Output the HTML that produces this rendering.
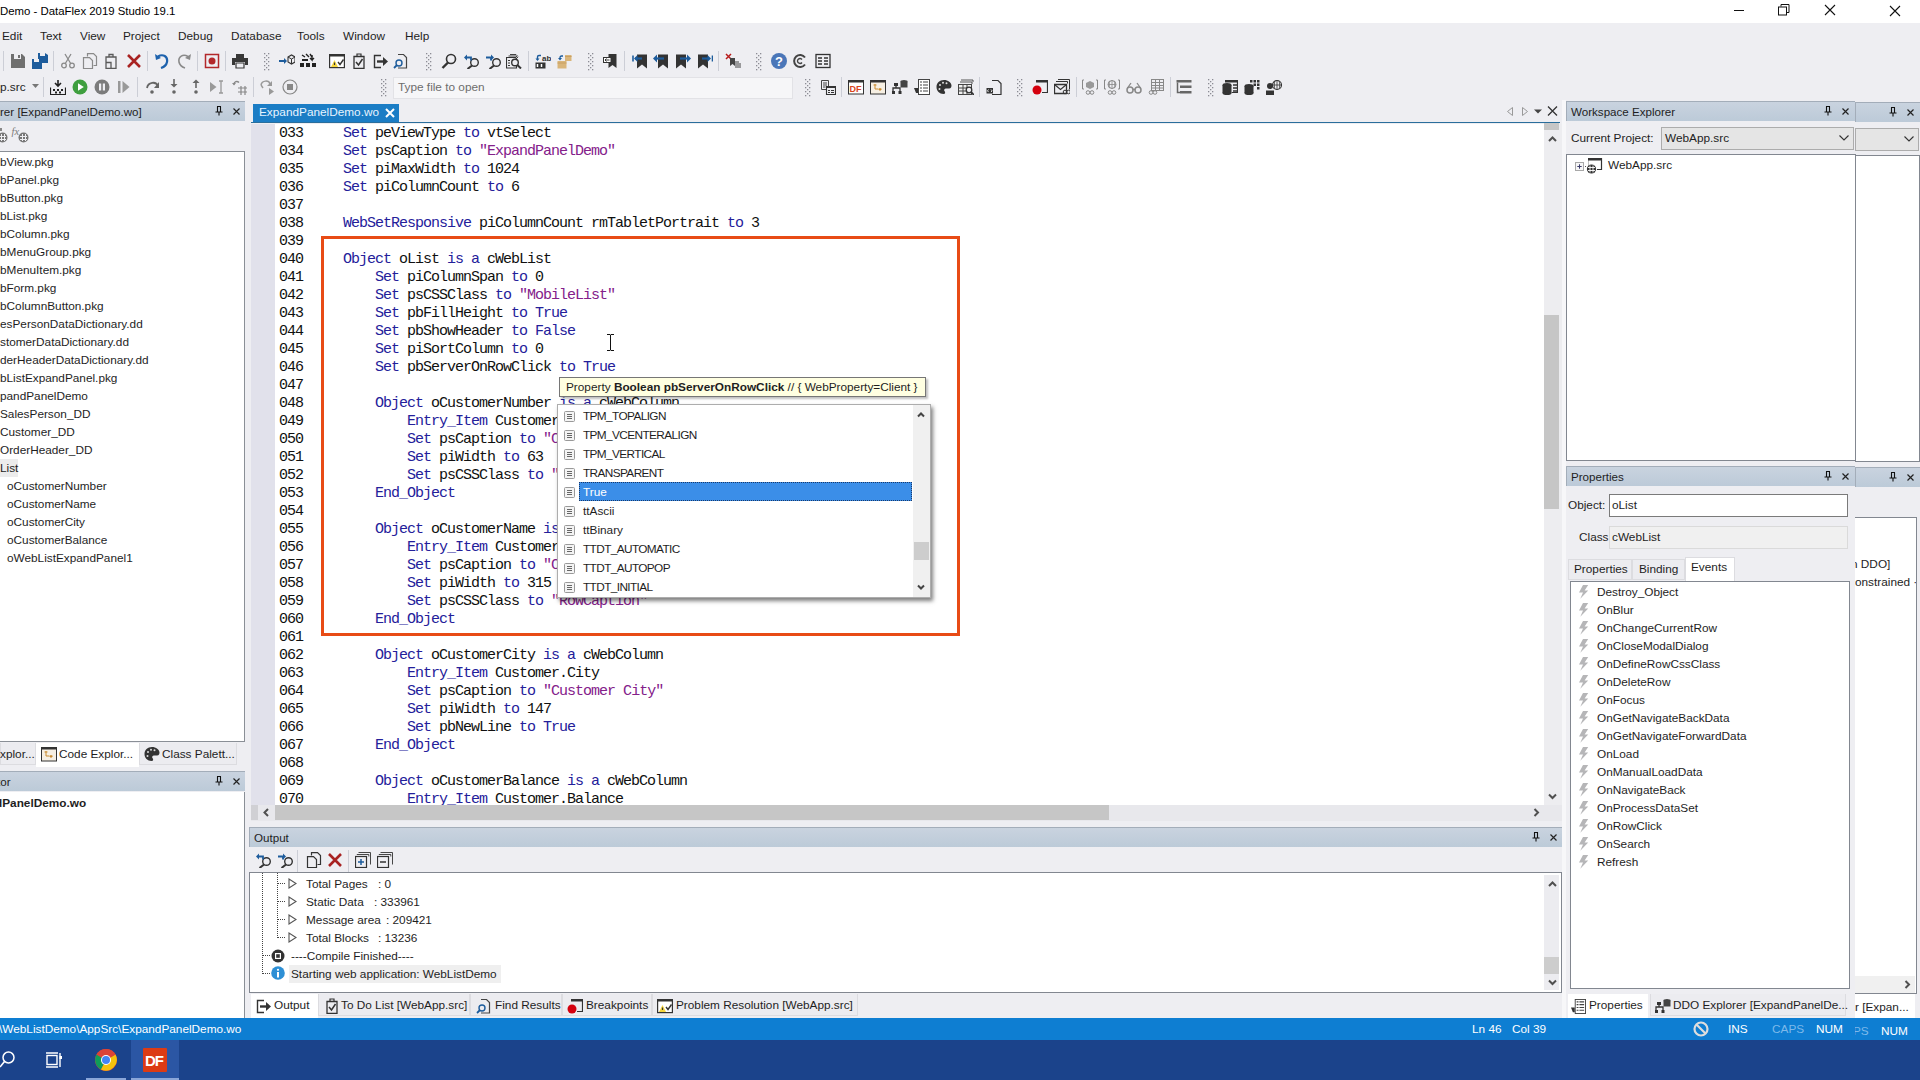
<!DOCTYPE html><html><head><meta charset="utf-8"><style>
*{margin:0;padding:0;box-sizing:border-box}
html,body{width:1920px;height:1080px;overflow:hidden;background:#eeeef2;font-family:"Liberation Sans",sans-serif;font-size:11.8px;color:#1e1e1e}
.a{position:absolute}
.t{position:absolute;white-space:pre;line-height:18px;height:18px}
.m{font-family:"Liberation Mono",monospace;font-size:15px;letter-spacing:-1px;color:#101010}
.hdr{position:absolute;height:20px;background:linear-gradient(#c9d3df,#bccad8);border-top:1px solid #a3adb9;border-left:1px solid #a3adb9}
.hdr span{position:absolute;left:4px;top:1px;line-height:17px;font-size:11.6px;color:#1e1e1e;white-space:pre}
.k{color:#24209a}
.s{color:#84208a}
.wh{background:#fff}
.grip{width:5px;background-image:linear-gradient(90deg,#b4b4bc 1px,transparent 1px),linear-gradient(90deg,#b4b4bc 1px,transparent 1px);background-size:4px 4px,4px 4px;background-position:0 0,2px 2px;background-repeat:repeat}
.tab{position:absolute;background:#ececf0;border:1px solid #dcdce0;border-top:none}
</style></head><body>
<div class="a" style="left:0;top:0;width:1920px;height:23px;background:#fff"></div>
<div class="t" style="left:0px;top:2px;color:#000;font-size:11.4px">Demo - DataFlex 2019 Studio 19.1</div>
<div class="a" style="left:1734px;top:10px;width:10px;height:1px;background:#111"></div>
<svg class="a" style="left:1778px;top:4px" width="12" height="12"><path d="M3 2.5V0.5h8v8H9" fill="none" stroke="#111"/><rect x="0.5" y="3" width="8" height="8" fill="none" stroke="#111"/></svg>
<svg class="a" style="left:1824px;top:4px" width="12" height="12"><path d="M1 1l10 10M11 1L1 11" stroke="#111" stroke-width="1.1"/></svg>
<svg class="a" style="left:1889px;top:5px" width="12" height="12"><path d="M1 1l10 10M11 1L1 11" stroke="#111" stroke-width="1.1"/></svg>
<div class="t" style="left:2px;top:27px;font-size:11.8px">Edit</div>
<div class="t" style="left:40px;top:27px;font-size:11.8px">Text</div>
<div class="t" style="left:80px;top:27px;font-size:11.8px">View</div>
<div class="t" style="left:123px;top:27px;font-size:11.8px">Project</div>
<div class="t" style="left:178px;top:27px;font-size:11.8px">Debug</div>
<div class="t" style="left:231px;top:27px;font-size:11.8px">Database</div>
<div class="t" style="left:297px;top:27px;font-size:11.8px">Tools</div>
<div class="t" style="left:343px;top:27px;font-size:11.8px">Window</div>
<div class="t" style="left:405px;top:27px;font-size:11.8px">Help</div>
<svg class="a" style="left:10px;top:53px" width="16" height="16" viewBox="0 0 16 16"><path d="M1 1h11l3 3v11H1z" fill="#6f6f6f"/><rect x="4" y="1" width="7" height="5" fill="#eeeef2"/><rect x="8" y="2" width="2" height="3" fill="#6f6f6f"/></svg>
<svg class="a" style="left:32px;top:53px" width="16" height="16" viewBox="0 0 16 16"><path d="M6 0h7l3 2v8H6z" fill="#1d5c9c"/><rect x="8" y="0" width="5" height="3" fill="#eeeef2"/><path d="M0 6h7l3 2v8H0z" fill="#1d5c9c"/><rect x="2" y="6" width="5" height="3" fill="#eeeef2"/></svg>
<svg class="a" style="left:60px;top:53px" width="16" height="16" viewBox="0 0 16 16"><g fill="none" stroke="#8a8a8a" stroke-width="1.3"><circle cx="4" cy="12.5" r="2.3"/><circle cx="12" cy="12.5" r="2.3"/><path d="M5.3 10.5L11 1M10.7 10.5L5 1"/></g></svg>
<svg class="a" style="left:82px;top:53px" width="16" height="16" viewBox="0 0 16 16"><g fill="none" stroke="#8a8a8a" stroke-width="1.2"><path d="M5.5 3.5V0.6h6l3 3v8.9h-3"/><path d="M1.5 4.6h6l3 3v8h-9z"/></g></svg>
<svg class="a" style="left:103px;top:53px" width="16" height="16" viewBox="0 0 16 16"><g fill="none" stroke="#5a5a5a" stroke-width="1.3"><path d="M3 4h10v11.5H3z"/><path d="M6 4V1.5h4V4"/><path d="M3 9.5h5v6"/></g></svg>
<svg class="a" style="left:126px;top:53px" width="16" height="16" viewBox="0 0 16 16"><path d="M2 2l12 12M14 2L2 14" stroke="#a82222" stroke-width="2.6"/></svg>
<svg class="a" style="left:154px;top:53px" width="16" height="16" viewBox="0 0 16 16"><path d="M4 3.5c5-3 10 0 9 5.5-.6 3-3 5-6 6" fill="none" stroke="#1e62ad" stroke-width="2.2"/><path d="M1 1l1 6 5-2z" fill="#1e62ad"/></svg>
<svg class="a" style="left:176px;top:53px" width="16" height="16" viewBox="0 0 16 16"><path d="M12 3.5c-5-3-10 0-9 5.5.6 3 3 5 6 6" fill="none" stroke="#8a8a8a" stroke-width="1.6"/><path d="M15 1l-1 6-5-2z" fill="#8a8a8a"/></svg>
<svg class="a" style="left:204px;top:53px" width="16" height="16" viewBox="0 0 16 16"><rect x="1.5" y="1.5" width="13" height="13" fill="none" stroke="#b3282b" stroke-width="1.5"/><circle cx="8" cy="8" r="3.5" fill="#b3282b"/></svg>
<svg class="a" style="left:232px;top:53px" width="16" height="16" viewBox="0 0 16 16"><path d="M4 1h8v4H4z" fill="#383838"/><path d="M0 5h16v7h-3v-3H3v3H0z" fill="#383838"/><path d="M4 10h8v5H4z" fill="none" stroke="#383838" stroke-width="1.2"/></svg>
<svg class="a" style="left:279px;top:53px" width="16" height="16" viewBox="0 0 16 16"><path d="M0 8h6" stroke="#1d5c9c" stroke-width="2"/><path d="M5 5l3 3-3 3z" fill="#1d5c9c"/><path d="M9 4l3.5-2 3.5 2v5l-3.5 2-3.5-2z" fill="none" stroke="#333" stroke-width="1.1"/><path d="M9 4l3.5 2 3.5-2M12.5 6v5" fill="none" stroke="#333" stroke-width="1"/></svg>
<svg class="a" style="left:300px;top:53px" width="16" height="16" viewBox="0 0 16 16"><path d="M2 2l3 2M6 1l3 3M10 1l2 3" stroke="#222" stroke-width="1.4"/><path d="M12 2v5l-2-2M12 7l2-2" stroke="#222" stroke-width="1.4" fill="none"/><rect x="0" y="10" width="4" height="4" fill="#222"/><rect x="6" y="10" width="4" height="4" fill="#222"/><rect x="12" y="10" width="4" height="4" fill="#222"/><rect x="2" y="6" width="6" height="2" fill="#222"/></svg>
<svg class="a" style="left:329px;top:53px" width="16" height="16" viewBox="0 0 16 16"><rect x="0.6" y="1.6" width="14.8" height="13" fill="#fff" stroke="#333" stroke-width="1.2"/><rect x="0" y="1" width="16" height="2.5" fill="#333"/><path d="M2 14l3.5-7 3.5 7z" fill="#f5d63d"/><path d="M5.5 9.5v2.5" stroke="#333" stroke-width="1.2"/><path d="M9 9l2 2.5 3.5-5" fill="none" stroke="#333" stroke-width="1.4"/></svg>
<svg class="a" style="left:351px;top:53px" width="16" height="16" viewBox="0 0 16 16"><path d="M3 3.5h10v12H3z" fill="none" stroke="#333" stroke-width="1.3"/><path d="M6 3.5V1h4v2.5" fill="none" stroke="#333" stroke-width="1.2"/><path d="M5 9l2.5 3 4-6" fill="none" stroke="#333" stroke-width="1.5"/></svg>
<svg class="a" style="left:373px;top:53px" width="16" height="16" viewBox="0 0 16 16"><path d="M8 2.5H1.5v12H8" fill="none" stroke="#333" stroke-width="1.4"/><path d="M4 8.5h7" stroke="#333" stroke-width="2.4"/><path d="M10 4l5 4.5-5 4.5z" fill="#333"/></svg>
<svg class="a" style="left:393px;top:53px" width="16" height="16" viewBox="0 0 16 16"><path d="M5 1.5h5.5l3 3V15H5" fill="none" stroke="#444" stroke-width="1.2"/><circle cx="6" cy="10" r="3" fill="none" stroke="#1d5c9c" stroke-width="1.4"/><path d="M4 12l-3 3" stroke="#1d5c9c" stroke-width="1.8"/></svg>
<svg class="a" style="left:441px;top:53px" width="16" height="16" viewBox="0 0 16 16"><circle cx="10" cy="6" r="4.5" fill="none" stroke="#333" stroke-width="1.6"/><path d="M7 9.5L1.5 15" stroke="#333" stroke-width="2.4"/></svg>
<svg class="a" style="left:464px;top:53px" width="16" height="16" viewBox="0 0 16 16"><circle cx="10.5" cy="9.5" r="3.8" fill="none" stroke="#333" stroke-width="1.4"/><path d="M8 12.5L3.5 16" stroke="#333" stroke-width="2"/><path d="M2 4.5h5v3" fill="none" stroke="#1d5c9c" stroke-width="1.8"/><path d="M0 4.5l3-3v6z" fill="#1d5c9c"/></svg>
<svg class="a" style="left:486px;top:53px" width="16" height="16" viewBox="0 0 16 16"><circle cx="10.5" cy="9.5" r="3.8" fill="none" stroke="#333" stroke-width="1.4"/><path d="M8 12.5L3.5 16" stroke="#333" stroke-width="2"/><path d="M0 4.5h5v3" fill="none" stroke="#1d5c9c" stroke-width="1.8"/><path d="M8 4.5l-3-3v6z" fill="#1d5c9c"/></svg>
<svg class="a" style="left:506px;top:53px" width="16" height="16" viewBox="0 0 16 16"><path d="M4 1.5h6l2 2M2.5 3h7.5l2 2" fill="none" stroke="#444" stroke-width="1"/><path d="M0.5 4.5h9l1 1v9.5h-10z" fill="#eeeef2" stroke="#333" stroke-width="1.1"/><path d="M2 7.5h2M2 10h2M2 12.5h2" stroke="#333" stroke-width="1.2"/><circle cx="9" cy="9.5" r="3.3" fill="#eeeef2" stroke="#333" stroke-width="1.4"/><path d="M11.3 12l3.7 3.5" stroke="#333" stroke-width="2"/></svg>
<svg class="a" style="left:535px;top:53px" width="16" height="16" viewBox="0 0 16 16"><path d="M6 2.5H4C3 2.5 2.5 3 2.5 4v2.5" fill="none" stroke="#1d5c9c" stroke-width="1.4"/><path d="M0.5 5.5h4l-2 2.5z" fill="#1d5c9c"/><text x="7" y="7.5" font-size="8" font-weight="bold" font-family="Liberation Sans" fill="#333">ab</text><rect x="0.5" y="9.5" width="10" height="6" fill="#333"/><path d="M2.5 11v3M6.5 11v3" stroke="#fff" stroke-width="1.5"/></svg>
<svg class="a" style="left:557px;top:53px" width="16" height="16" viewBox="0 0 16 16"><rect x="8" y="2" width="6.5" height="6" fill="#d9b57a"/><path d="M8 3.5h6.5" stroke="#c9a062" stroke-width="1"/><rect x="0.5" y="8" width="9" height="7.5" fill="#d9b57a"/><path d="M0.5 10h9" stroke="#c9a062" stroke-width="1"/><path d="M6 3H4.5C3.5 3 3 3.5 3 4.5V6" fill="none" stroke="#1d5c9c" stroke-width="1.3"/><path d="M1 5h4l-2 2.5z" fill="#1d5c9c"/></svg>
<svg class="a" style="left:603px;top:53px" width="16" height="16" viewBox="0 0 16 16"><path d="M5.5 1h8v14l-4-3-4 3z" fill="#333"/><rect x="0.5" y="4.5" width="7.5" height="5" fill="#fff" stroke="#333"/><path d="M2 7h4.5M3.5 5.5L2 7l1.5 1.5" fill="none" stroke="#333" stroke-width="1"/></svg>
<svg class="a" style="left:632px;top:53px" width="16" height="16" viewBox="0 0 16 16"><path d="M5 1.5h10v14l-5-4-5 4z" fill="#333"/><path d="M1 2.5v6" stroke="#1d5c9c" stroke-width="1.6"/><path d="M3 5.5h7" stroke="#1d5c9c" stroke-width="2.2"/><path d="M2 5.5l3.5-3.5v7z" fill="#1d5c9c"/></svg>
<svg class="a" style="left:653px;top:53px" width="16" height="16" viewBox="0 0 16 16"><path d="M5 1.5h10v14l-5-4-5 4z" fill="#333"/><path d="M3 5.5h8" stroke="#1d5c9c" stroke-width="2.2"/><path d="M0 5.5l4-4v8z" fill="#1d5c9c"/></svg>
<svg class="a" style="left:675px;top:53px" width="16" height="16" viewBox="0 0 16 16"><path d="M1 1.5h10v14l-5-4-5 4z" fill="#333"/><path d="M5 5.5h8" stroke="#1d5c9c" stroke-width="2.2"/><path d="M16 5.5l-4-4v8z" fill="#1d5c9c"/></svg>
<svg class="a" style="left:697px;top:53px" width="16" height="16" viewBox="0 0 16 16"><path d="M1 1.5h10v14l-5-4-5 4z" fill="#333"/><path d="M5 5.5h6" stroke="#1d5c9c" stroke-width="2.2"/><path d="M14 5.5l-3.5-3.5v7z" fill="#1d5c9c"/><path d="M15.5 2.5v6" stroke="#1d5c9c" stroke-width="1.6"/></svg>
<svg class="a" style="left:725px;top:53px" width="16" height="16" viewBox="0 0 16 16"><path d="M1 1l5 5M6 1L1 6" stroke="#b81c1c" stroke-width="1.5"/><path d="M5 5h5v8l-2.5-2-2.5 2z" fill="#444"/><path d="M11 8v7M13 8v7M15 10v5" stroke="#444" stroke-width="1"/></svg>
<svg class="a" style="left:771px;top:53px" width="16" height="16" viewBox="0 0 16 16"><circle cx="8" cy="8" r="8" fill="#4a76b8"/><text x="8" y="13" text-anchor="middle" font-size="13" font-weight="bold" font-family="Liberation Sans" fill="#fff">?</text></svg>
<svg class="a" style="left:792px;top:53px" width="16" height="16" viewBox="0 0 16 16"><path d="M13 4.5A6 6 0 1 0 13 11.5" fill="none" stroke="#444" stroke-width="2"/><path d="M10 6.5A2.5 2.5 0 1 0 10 9.5" fill="none" stroke="#444" stroke-width="1.4"/></svg>
<svg class="a" style="left:815px;top:53px" width="16" height="16" viewBox="0 0 16 16"><rect x="1" y="1.5" width="14" height="13" fill="none" stroke="#333" stroke-width="1.3"/><path d="M3 5h4M9 5h4M3 8h4M9 8h4M3 11h4M9 11h4" stroke="#333" stroke-width="1.6"/></svg>
<div class="a" style="left:3px;top:51px;width:1px;height:20px;background:#ccced6"></div>
<div class="a" style="left:53px;top:51px;width:1px;height:20px;background:#ccced6"></div>
<div class="a" style="left:147px;top:51px;width:1px;height:20px;background:#ccced6"></div>
<div class="a" style="left:197px;top:51px;width:1px;height:20px;background:#ccced6"></div>
<div class="a" style="left:225px;top:51px;width:1px;height:20px;background:#ccced6"></div>
<div class="a" style="left:528px;top:51px;width:1px;height:20px;background:#ccced6"></div>
<div class="a" style="left:624px;top:51px;width:1px;height:20px;background:#ccced6"></div>
<div class="a" style="left:718px;top:51px;width:1px;height:20px;background:#ccced6"></div>
<svg class="a" style="left:264px;top:51px" width="6" height="20"><rect x="0" y="2" width="1.3" height="1.3" fill="#8c8c94"/><rect x="4" y="2" width="1.3" height="1.3" fill="#8c8c94"/><rect x="2" y="4" width="1.3" height="1.3" fill="#8c8c94"/><rect x="0" y="6" width="1.3" height="1.3" fill="#8c8c94"/><rect x="4" y="6" width="1.3" height="1.3" fill="#8c8c94"/><rect x="2" y="8" width="1.3" height="1.3" fill="#8c8c94"/><rect x="0" y="10" width="1.3" height="1.3" fill="#8c8c94"/><rect x="4" y="10" width="1.3" height="1.3" fill="#8c8c94"/><rect x="2" y="12" width="1.3" height="1.3" fill="#8c8c94"/><rect x="0" y="14" width="1.3" height="1.3" fill="#8c8c94"/><rect x="4" y="14" width="1.3" height="1.3" fill="#8c8c94"/><rect x="2" y="16" width="1.3" height="1.3" fill="#8c8c94"/><rect x="0" y="18" width="1.3" height="1.3" fill="#8c8c94"/><rect x="4" y="18" width="1.3" height="1.3" fill="#8c8c94"/></svg>
<svg class="a" style="left:426px;top:51px" width="6" height="20"><rect x="0" y="2" width="1.3" height="1.3" fill="#8c8c94"/><rect x="4" y="2" width="1.3" height="1.3" fill="#8c8c94"/><rect x="2" y="4" width="1.3" height="1.3" fill="#8c8c94"/><rect x="0" y="6" width="1.3" height="1.3" fill="#8c8c94"/><rect x="4" y="6" width="1.3" height="1.3" fill="#8c8c94"/><rect x="2" y="8" width="1.3" height="1.3" fill="#8c8c94"/><rect x="0" y="10" width="1.3" height="1.3" fill="#8c8c94"/><rect x="4" y="10" width="1.3" height="1.3" fill="#8c8c94"/><rect x="2" y="12" width="1.3" height="1.3" fill="#8c8c94"/><rect x="0" y="14" width="1.3" height="1.3" fill="#8c8c94"/><rect x="4" y="14" width="1.3" height="1.3" fill="#8c8c94"/><rect x="2" y="16" width="1.3" height="1.3" fill="#8c8c94"/><rect x="0" y="18" width="1.3" height="1.3" fill="#8c8c94"/><rect x="4" y="18" width="1.3" height="1.3" fill="#8c8c94"/></svg>
<svg class="a" style="left:588px;top:51px" width="6" height="20"><rect x="0" y="2" width="1.3" height="1.3" fill="#8c8c94"/><rect x="4" y="2" width="1.3" height="1.3" fill="#8c8c94"/><rect x="2" y="4" width="1.3" height="1.3" fill="#8c8c94"/><rect x="0" y="6" width="1.3" height="1.3" fill="#8c8c94"/><rect x="4" y="6" width="1.3" height="1.3" fill="#8c8c94"/><rect x="2" y="8" width="1.3" height="1.3" fill="#8c8c94"/><rect x="0" y="10" width="1.3" height="1.3" fill="#8c8c94"/><rect x="4" y="10" width="1.3" height="1.3" fill="#8c8c94"/><rect x="2" y="12" width="1.3" height="1.3" fill="#8c8c94"/><rect x="0" y="14" width="1.3" height="1.3" fill="#8c8c94"/><rect x="4" y="14" width="1.3" height="1.3" fill="#8c8c94"/><rect x="2" y="16" width="1.3" height="1.3" fill="#8c8c94"/><rect x="0" y="18" width="1.3" height="1.3" fill="#8c8c94"/><rect x="4" y="18" width="1.3" height="1.3" fill="#8c8c94"/></svg>
<svg class="a" style="left:756px;top:51px" width="6" height="20"><rect x="0" y="2" width="1.3" height="1.3" fill="#8c8c94"/><rect x="4" y="2" width="1.3" height="1.3" fill="#8c8c94"/><rect x="2" y="4" width="1.3" height="1.3" fill="#8c8c94"/><rect x="0" y="6" width="1.3" height="1.3" fill="#8c8c94"/><rect x="4" y="6" width="1.3" height="1.3" fill="#8c8c94"/><rect x="2" y="8" width="1.3" height="1.3" fill="#8c8c94"/><rect x="0" y="10" width="1.3" height="1.3" fill="#8c8c94"/><rect x="4" y="10" width="1.3" height="1.3" fill="#8c8c94"/><rect x="2" y="12" width="1.3" height="1.3" fill="#8c8c94"/><rect x="0" y="14" width="1.3" height="1.3" fill="#8c8c94"/><rect x="4" y="14" width="1.3" height="1.3" fill="#8c8c94"/><rect x="2" y="16" width="1.3" height="1.3" fill="#8c8c94"/><rect x="0" y="18" width="1.3" height="1.3" fill="#8c8c94"/><rect x="4" y="18" width="1.3" height="1.3" fill="#8c8c94"/></svg>
<div class="t" style="left:0px;top:78px;">p.src</div>
<svg class="a" style="left:32px;top:84px" width="7" height="4"><path d="M0 0h7L3.5 4z" fill="#777"/></svg>
<svg class="a" style="left:50px;top:79px" width="16" height="16" viewBox="0 0 16 16"><path d="M8 1v6M5 4l3 3 3-3" fill="none" stroke="#222" stroke-width="1.6"/><path d="M0.5 8.5v7h15v-7" fill="none" stroke="#222" stroke-width="1.2"/><g fill="#222"><rect x="3" y="10" width="2" height="2"/><rect x="7" y="10" width="2" height="2"/><rect x="11" y="10" width="2" height="2"/><rect x="5" y="12.5" width="2" height="2"/><rect x="9" y="12.5" width="2" height="2"/></g></svg>
<svg class="a" style="left:72px;top:79px" width="16" height="16" viewBox="0 0 16 16"><circle cx="8" cy="8" r="7.5" fill="#3f9f3f"/><path d="M6 4.3v7.4l5.8-3.7z" fill="#fff"/></svg>
<svg class="a" style="left:94px;top:79px" width="16" height="16" viewBox="0 0 16 16"><circle cx="8" cy="8" r="7.5" fill="#7b7b7b"/><rect x="5" y="4.5" width="2.2" height="7" fill="#eeeef2"/><rect x="8.8" y="4.5" width="2.2" height="7" fill="#eeeef2"/></svg>
<svg class="a" style="left:117px;top:79px" width="16" height="16" viewBox="0 0 16 16"><rect x="1" y="2" width="2.5" height="12" fill="#999"/><path d="M5.5 2v12l7-6z" fill="#999"/></svg>
<svg class="a" style="left:145px;top:79px" width="16" height="16" viewBox="0 0 16 16"><path d="M2 9c1-6 9-7 11-2" fill="none" stroke="#666" stroke-width="1.8"/><path d="M14 3v6H9z" fill="#666"/><circle cx="7" cy="13" r="1.8" fill="#666"/></svg>
<svg class="a" style="left:166px;top:79px" width="16" height="16" viewBox="0 0 16 16"><path d="M8 0v6" stroke="#666" stroke-width="1.6"/><path d="M4.5 5L8 8.5 11.5 5z" fill="#666"/><circle cx="8" cy="13" r="1.8" fill="#666"/></svg>
<svg class="a" style="left:188px;top:79px" width="16" height="16" viewBox="0 0 16 16"><path d="M8 3v6" stroke="#666" stroke-width="1.6"/><path d="M4.5 4L8 0.5 11.5 4z" fill="#666"/><circle cx="8" cy="13" r="1.8" fill="#666"/></svg>
<svg class="a" style="left:210px;top:79px" width="16" height="16" viewBox="0 0 16 16"><path d="M0 3v10l6.5-5z" fill="#999"/><path d="M9 2h4M11 2v12M9 14h4" stroke="#999" stroke-width="1.3"/></svg>
<svg class="a" style="left:231px;top:79px" width="16" height="16" viewBox="0 0 16 16"><path d="M3 5.5c0-3 3-4 5-2" fill="none" stroke="#888" stroke-width="1.4"/><path d="M1 4l2 2.5L5 4" fill="#888"/><path d="M7 9h9M7 13h9M10 7v9M14 7v9" stroke="#888" stroke-width="1.2"/></svg>
<svg class="a" style="left:259px;top:79px" width="16" height="16" viewBox="0 0 16 16"><path d="M2 6c1-5 8-5 9-1" fill="none" stroke="#999" stroke-width="1.5"/><path d="M13 2v5H8z" fill="#999"/><path d="M10 9v7l5-3.5z" fill="#999"/><path d="M2 6l2 3" stroke="#999" stroke-width="1.4"/></svg>
<svg class="a" style="left:282px;top:79px" width="16" height="16" viewBox="0 0 16 16"><circle cx="8" cy="8" r="7" fill="none" stroke="#888" stroke-width="1.2"/><rect x="5" y="5" width="6" height="6" fill="#888"/></svg>
<svg class="a" style="left:820px;top:79px" width="16" height="16" viewBox="0 0 16 16"><path d="M1.5 1.5h7v9h-7z" fill="none" stroke="#444" stroke-width="1"/><path d="M3 4h4M3 6h4M3 8h2.5" stroke="#444" stroke-width="1"/><path d="M6.5 7.5h9v8h-9z" fill="#eeeef2" stroke="#333" stroke-width="1.1"/><rect x="6" y="7" width="10" height="2" fill="#333"/><path d="M8 11.5h2M11 11.5h3M8 13.5h2M11 13.5h3" stroke="#333" stroke-width="1.2"/></svg>
<svg class="a" style="left:848px;top:79px" width="16" height="16" viewBox="0 0 16 16"><rect x="0.5" y="1.5" width="15" height="13.5" fill="#fff" stroke="#333"/><rect x="0" y="1" width="16" height="2.5" fill="#333"/><text x="1.5" y="13" font-size="9" font-weight="bold" font-family="Liberation Sans" fill="#d9451e">DF</text></svg>
<svg class="a" style="left:870px;top:79px" width="16" height="16" viewBox="0 0 16 16"><rect x="0.5" y="1.5" width="15" height="13.5" fill="#f6efe3" stroke="#333"/><rect x="0" y="1" width="16" height="2.5" fill="#333"/><path d="M3 6l2-1 2 1-2 1z" fill="#c98a2e"/><path d="M8 10l2-1 2 1-2 2z" fill="#c98a2e"/><path d="M5 7v3h3" fill="none" stroke="#c98a2e"/></svg>
<svg class="a" style="left:892px;top:79px" width="16" height="16" viewBox="0 0 16 16"><ellipse cx="12" cy="2.5" rx="3.5" ry="1.5" fill="#444"/><rect x="8.5" y="2.5" width="7" height="6" fill="#444"/><path d="M4 6v3M1 12V9h7v3" fill="none" stroke="#333" stroke-width="1.3"/><rect x="2" y="4" width="4" height="3" fill="#333"/><rect x="0" y="12" width="3" height="3" fill="#333"/><rect x="6.5" y="12" width="3" height="3" fill="#333"/></svg>
<svg class="a" style="left:914px;top:79px" width="16" height="16" viewBox="0 0 16 16"><rect x="4.5" y="0.5" width="11" height="15" fill="#fff" stroke="#444"/><path d="M6 3h2M9 3h5M6 6h2M9 6h5M6 9h2M9 9h5M6 12h2M9 12h5" stroke="#444" stroke-width="1.2"/><path d="M0 9h4v5H2z" fill="#333"/></svg>
<svg class="a" style="left:936px;top:79px" width="16" height="16" viewBox="0 0 16 16"><path d="M8 1C3.5 1 0.5 4 0.5 8s3 7 7 7c2 0 2-2 1-3s0-2.5 1.5-2.5H13c2 0 2.5-1.5 2.5-3C15.5 3.5 12 1 8 1z" fill="#333"/><circle cx="4" cy="6" r="1" fill="#ddd"/><circle cx="7" cy="3.8" r="1" fill="#ddd"/><circle cx="10.5" cy="4.2" r="1" fill="#ddd"/><circle cx="3.5" cy="10" r="1" fill="#ddd"/></svg>
<svg class="a" style="left:958px;top:79px" width="16" height="16" viewBox="0 0 16 16"><path d="M3 1h12v2M2 3h12v2" fill="none" stroke="#444" stroke-width=".9"/><rect x="0.5" y="5.5" width="13" height="10" fill="#eee" stroke="#444"/><path d="M0.5 9h13M0.5 12h13M5 5.5v10M9 5.5v10" stroke="#444"/><circle cx="11" cy="11" r="2.8" fill="#eeeef2" stroke="#333" stroke-width="1.3"/><path d="M13 13l3 3" stroke="#333" stroke-width="1.8"/></svg>
<svg class="a" style="left:986px;top:79px" width="16" height="16" viewBox="0 0 16 16"><path d="M6 1.5h6l3 3v11H6" fill="none" stroke="#333" stroke-width="1.2"/><rect x="0.5" y="9" width="6.5" height="5.5" fill="#333"/><path d="M2.5 10.5l-1 1.3 1 1.3M5 10.5l1 1.3-1 1.3" stroke="#fff" stroke-width=".9" fill="none"/></svg>
<svg class="a" style="left:1032px;top:79px" width="16" height="16" viewBox="0 0 16 16"><path d="M4 1.5h11.5v12H10" fill="none" stroke="#333" stroke-width="1.2"/><rect x="4" y="1" width="11.5" height="2.5" fill="#333"/><circle cx="5" cy="11" r="4.5" fill="#d4000e"/></svg>
<svg class="a" style="left:1054px;top:79px" width="16" height="16" viewBox="0 0 16 16"><path d="M4 0.5h11.5v10M2 2.5h11.5v2" fill="none" stroke="#333" stroke-width="1"/><path d="M0.5 5.5h12v9H0.5z" fill="none" stroke="#333" stroke-width="1.3"/><path d="M0.5 5.5l6 5 6-5" fill="none" stroke="#333" stroke-width="1.1"/><circle cx="11" cy="13" r="1.8" fill="none" stroke="#333"/><circle cx="14.5" cy="13" r="1.8" fill="none" stroke="#333"/></svg>
<svg class="a" style="left:1082px;top:79px" width="16" height="16" viewBox="0 0 16 16"><path d="M2 1H0.5v9H2M14 1h1.5v9H14" fill="none" stroke="#888" stroke-width="1"/><path d="M4 4l4-2 4 2v4l-4 2-4-2z" fill="#999"/><circle cx="6" cy="13.5" r="1.8" fill="none" stroke="#888"/><circle cx="10" cy="13.5" r="1.8" fill="none" stroke="#888"/></svg>
<svg class="a" style="left:1104px;top:79px" width="16" height="16" viewBox="0 0 16 16"><path d="M2 1H0.5v9H2M14 1h1.5v9H14" fill="none" stroke="#888" stroke-width="1"/><circle cx="8" cy="5.5" r="4" fill="none" stroke="#888"/><path d="M4 5.5h8M8 1.5v8M6 2c-1 2-1 5 0 7M10 2c1 2 1 5 0 7" fill="none" stroke="#888" stroke-width=".8"/><circle cx="6" cy="13.5" r="1.8" fill="none" stroke="#888"/><circle cx="10" cy="13.5" r="1.8" fill="none" stroke="#888"/></svg>
<svg class="a" style="left:1126px;top:79px" width="16" height="16" viewBox="0 0 16 16"><circle cx="4" cy="11" r="3" fill="none" stroke="#888" stroke-width="1.5"/><circle cx="12" cy="11" r="3" fill="none" stroke="#888" stroke-width="1.5"/><path d="M7 10.5h2M1.5 9L5 4M14.5 9L11 4" fill="none" stroke="#888" stroke-width="1.3"/></svg>
<svg class="a" style="left:1148px;top:79px" width="16" height="16" viewBox="0 0 16 16"><rect x="3.5" y="0.5" width="12" height="11" fill="none" stroke="#888"/><path d="M3.5 3.5h12M3.5 6.5h12M3.5 9h12M7.5 0.5v11M11.5 0.5v11" stroke="#888"/><circle cx="3" cy="13.5" r="1.8" fill="#eeeef2" stroke="#888"/><circle cx="7" cy="13.5" r="1.8" fill="#eeeef2" stroke="#888"/></svg>
<svg class="a" style="left:1176px;top:79px" width="16" height="16" viewBox="0 0 16 16"><rect x="0.5" y="1" width="15" height="2.5" fill="#666"/><rect x="4" y="6.5" width="11.5" height="2.5" fill="#666"/><rect x="4" y="12" width="11.5" height="2.5" fill="#666"/><path d="M1.5 3.5v10h2.5" fill="none" stroke="#666" stroke-width="1.5"/></svg>
<svg class="a" style="left:1222px;top:79px" width="16" height="16" viewBox="0 0 16 16"><ellipse cx="5" cy="6" rx="4.5" ry="2" fill="#333"/><rect x="0.5" y="6" width="9" height="8" fill="#333"/><ellipse cx="5" cy="14" rx="4.5" ry="2" fill="#333"/><path d="M3 1.5h12.5v12H10" fill="none" stroke="#333" stroke-width="1.2"/><rect x="3" y="1" width="12.5" height="2.5" fill="#333"/><path d="M11 6h4M11 9h4M11 12h4" stroke="#333" stroke-width="1.6"/></svg>
<svg class="a" style="left:1244px;top:79px" width="16" height="16" viewBox="0 0 16 16"><ellipse cx="5" cy="7" rx="4.5" ry="2" fill="#333"/><rect x="0.5" y="7" width="9" height="7" fill="#333"/><ellipse cx="5" cy="14" rx="4.5" ry="2" fill="#333"/><g fill="#333"><rect x="6" y="1" width="2.5" height="2.5"/><rect x="9.5" y="1" width="2.5" height="2.5"/><rect x="13" y="1" width="2.5" height="2.5"/><rect x="9.5" y="4.5" width="2.5" height="2.5"/><rect x="13" y="4.5" width="2.5" height="2.5"/><rect x="13" y="8" width="2.5" height="2.5"/></g></svg>
<svg class="a" style="left:1266px;top:79px" width="16" height="16" viewBox="0 0 16 16"><circle cx="11" cy="6" r="4.5" fill="none" stroke="#333" stroke-width="1.1"/><path d="M6.5 6h9M11 1.5v9M9 2c-1 2-1 6 0 8M13 2c1 2 1 6 0 8" fill="none" stroke="#333" stroke-width=".8"/><circle cx="4" cy="7" r="3" fill="#333"/><path d="M0 16v-4.5h8V16z" fill="#333"/></svg>
<div class="a" style="left:43px;top:77px;width:1px;height:20px;background:#ccced6"></div>
<div class="a" style="left:137px;top:77px;width:1px;height:20px;background:#ccced6"></div>
<div class="a" style="left:253px;top:77px;width:1px;height:20px;background:#ccced6"></div>
<div class="a" style="left:841px;top:77px;width:1px;height:20px;background:#ccced6"></div>
<div class="a" style="left:979px;top:77px;width:1px;height:20px;background:#ccced6"></div>
<div class="a" style="left:1076px;top:77px;width:1px;height:20px;background:#ccced6"></div>
<div class="a" style="left:1170px;top:77px;width:1px;height:20px;background:#ccced6"></div>
<svg class="a" style="left:381px;top:77px" width="6" height="20"><rect x="0" y="2" width="1.3" height="1.3" fill="#8c8c94"/><rect x="4" y="2" width="1.3" height="1.3" fill="#8c8c94"/><rect x="2" y="4" width="1.3" height="1.3" fill="#8c8c94"/><rect x="0" y="6" width="1.3" height="1.3" fill="#8c8c94"/><rect x="4" y="6" width="1.3" height="1.3" fill="#8c8c94"/><rect x="2" y="8" width="1.3" height="1.3" fill="#8c8c94"/><rect x="0" y="10" width="1.3" height="1.3" fill="#8c8c94"/><rect x="4" y="10" width="1.3" height="1.3" fill="#8c8c94"/><rect x="2" y="12" width="1.3" height="1.3" fill="#8c8c94"/><rect x="0" y="14" width="1.3" height="1.3" fill="#8c8c94"/><rect x="4" y="14" width="1.3" height="1.3" fill="#8c8c94"/><rect x="2" y="16" width="1.3" height="1.3" fill="#8c8c94"/><rect x="0" y="18" width="1.3" height="1.3" fill="#8c8c94"/><rect x="4" y="18" width="1.3" height="1.3" fill="#8c8c94"/></svg>
<svg class="a" style="left:805px;top:77px" width="6" height="20"><rect x="0" y="2" width="1.3" height="1.3" fill="#8c8c94"/><rect x="4" y="2" width="1.3" height="1.3" fill="#8c8c94"/><rect x="2" y="4" width="1.3" height="1.3" fill="#8c8c94"/><rect x="0" y="6" width="1.3" height="1.3" fill="#8c8c94"/><rect x="4" y="6" width="1.3" height="1.3" fill="#8c8c94"/><rect x="2" y="8" width="1.3" height="1.3" fill="#8c8c94"/><rect x="0" y="10" width="1.3" height="1.3" fill="#8c8c94"/><rect x="4" y="10" width="1.3" height="1.3" fill="#8c8c94"/><rect x="2" y="12" width="1.3" height="1.3" fill="#8c8c94"/><rect x="0" y="14" width="1.3" height="1.3" fill="#8c8c94"/><rect x="4" y="14" width="1.3" height="1.3" fill="#8c8c94"/><rect x="2" y="16" width="1.3" height="1.3" fill="#8c8c94"/><rect x="0" y="18" width="1.3" height="1.3" fill="#8c8c94"/><rect x="4" y="18" width="1.3" height="1.3" fill="#8c8c94"/></svg>
<svg class="a" style="left:1017px;top:77px" width="6" height="20"><rect x="0" y="2" width="1.3" height="1.3" fill="#8c8c94"/><rect x="4" y="2" width="1.3" height="1.3" fill="#8c8c94"/><rect x="2" y="4" width="1.3" height="1.3" fill="#8c8c94"/><rect x="0" y="6" width="1.3" height="1.3" fill="#8c8c94"/><rect x="4" y="6" width="1.3" height="1.3" fill="#8c8c94"/><rect x="2" y="8" width="1.3" height="1.3" fill="#8c8c94"/><rect x="0" y="10" width="1.3" height="1.3" fill="#8c8c94"/><rect x="4" y="10" width="1.3" height="1.3" fill="#8c8c94"/><rect x="2" y="12" width="1.3" height="1.3" fill="#8c8c94"/><rect x="0" y="14" width="1.3" height="1.3" fill="#8c8c94"/><rect x="4" y="14" width="1.3" height="1.3" fill="#8c8c94"/><rect x="2" y="16" width="1.3" height="1.3" fill="#8c8c94"/><rect x="0" y="18" width="1.3" height="1.3" fill="#8c8c94"/><rect x="4" y="18" width="1.3" height="1.3" fill="#8c8c94"/></svg>
<svg class="a" style="left:1208px;top:77px" width="6" height="20"><rect x="0" y="2" width="1.3" height="1.3" fill="#8c8c94"/><rect x="4" y="2" width="1.3" height="1.3" fill="#8c8c94"/><rect x="2" y="4" width="1.3" height="1.3" fill="#8c8c94"/><rect x="0" y="6" width="1.3" height="1.3" fill="#8c8c94"/><rect x="4" y="6" width="1.3" height="1.3" fill="#8c8c94"/><rect x="2" y="8" width="1.3" height="1.3" fill="#8c8c94"/><rect x="0" y="10" width="1.3" height="1.3" fill="#8c8c94"/><rect x="4" y="10" width="1.3" height="1.3" fill="#8c8c94"/><rect x="2" y="12" width="1.3" height="1.3" fill="#8c8c94"/><rect x="0" y="14" width="1.3" height="1.3" fill="#8c8c94"/><rect x="4" y="14" width="1.3" height="1.3" fill="#8c8c94"/><rect x="2" y="16" width="1.3" height="1.3" fill="#8c8c94"/><rect x="0" y="18" width="1.3" height="1.3" fill="#8c8c94"/><rect x="4" y="18" width="1.3" height="1.3" fill="#8c8c94"/></svg>
<div class="a" style="left:393px;top:77px;width:400px;height:22px;background:#f6f6f8;border:1px solid #e2e2e6"></div>
<div class="t" style="left:398px;top:78px;color:#6d6d6d">Type file to open</div>
<div class="hdr" style="left:0;top:101px;width:245px;border-left:none"><span style="left:0">rer [ExpandPanelDemo.wo]</span></div>
<svg class="a" style="left:215px;top:106px" width="8" height="10" viewBox="0 0 8 10"><path d="M2 0.5h4M2.5 0.5v5.5M5.5 0.5v5.5M0.5 6h7M4 6.5v3" stroke="#111" stroke-width="1.1" fill="none"/></svg>
<svg class="a" style="left:232.5px;top:107.5px" width="7" height="7" viewBox="0 0 7 7"><path d="M0.5 0.5l6 6M6.5 0.5l-6 6" stroke="#222" stroke-width="1.2"/></svg>
<svg class="a" style="left:0;top:120px" width="40" height="28"><circle cx="2.5" cy="17.5" r="5" fill="#777"/><path d="M1.5 14.0v7M4.5 14.0v7M-1.0 16.5h7M-1.0 19.5h7" stroke="#eeeef2" stroke-width="1" shape-rendering="crispEdges"/><path d="M0 8h2v3H0z" fill="#888"/><circle cx="23.5" cy="17.5" r="5" fill="#777"/><path d="M22.5 14.0v7M25.5 14.0v7M20.0 16.5h7M20.0 19.5h7" stroke="#eeeef2" stroke-width="1" shape-rendering="crispEdges"/><text x="11.5" y="14.5" font-family="Liberation Serif" font-style="italic" font-size="10.5" fill="#7a7a7a">fx</text></svg>
<div class="a wh" style="left:0;top:151px;width:245px;height:591px;border-top:1px solid #8a8f96;border-right:1px solid #8a8f96;border-bottom:1px solid #8a8f96"></div>
<div class="t" style="left:0px;top:153px;">bView.pkg</div>
<div class="t" style="left:0px;top:171px;">bPanel.pkg</div>
<div class="t" style="left:0px;top:189px;">bButton.pkg</div>
<div class="t" style="left:0px;top:207px;">bList.pkg</div>
<div class="t" style="left:0px;top:225px;">bColumn.pkg</div>
<div class="t" style="left:0px;top:243px;">bMenuGroup.pkg</div>
<div class="t" style="left:0px;top:261px;">bMenuItem.pkg</div>
<div class="t" style="left:0px;top:279px;">bForm.pkg</div>
<div class="t" style="left:0px;top:297px;">bColumnButton.pkg</div>
<div class="t" style="left:0px;top:315px;">esPersonDataDictionary.dd</div>
<div class="t" style="left:0px;top:333px;">stomerDataDictionary.dd</div>
<div class="t" style="left:0px;top:351px;">derHeaderDataDictionary.dd</div>
<div class="t" style="left:0px;top:369px;">bListExpandPanel.pkg</div>
<div class="t" style="left:0px;top:387px;">pandPanelDemo</div>
<div class="t" style="left:0px;top:405px;">SalesPerson_DD</div>
<div class="t" style="left:0px;top:423px;">Customer_DD</div>
<div class="t" style="left:0px;top:441px;">OrderHeader_DD</div>
<div class="a" style="left:0;top:459px;width:18px;height:18px;background:#ececec"></div>
<div class="t" style="left:0px;top:459px;">List</div>
<div class="t" style="left:7px;top:477px;">oCustomerNumber</div>
<div class="t" style="left:7px;top:495px;">oCustomerName</div>
<div class="t" style="left:7px;top:513px;">oCustomerCity</div>
<div class="t" style="left:7px;top:531px;">oCustomerBalance</div>
<div class="t" style="left:7px;top:549px;">oWebListExpandPanel1</div>
<div class="tab" style="left:0;top:743px;width:36px;height:22px"></div>
<div class="a wh" style="left:36px;top:743px;width:103px;height:24px"></div>
<div class="tab" style="left:139px;top:743px;width:98px;height:22px"></div>
<div class="t" style="left:0px;top:745px;">xplor...</div>
<svg class="a" style="left:41px;top:746px" width="16" height="16" viewBox="0 0 16 16"><rect x="0.5" y="1.5" width="15" height="13.5" fill="#f6efe3" stroke="#333"/><rect x="0" y="1" width="16" height="2.5" fill="#333"/><path d="M3 6l2-1 2 1-2 1z" fill="#c98a2e"/><path d="M8 10l2-1 2 1-2 2z" fill="#c98a2e"/><path d="M5 7v3h3" fill="none" stroke="#c98a2e"/></svg>
<div class="t" style="left:59px;top:745px;">Code Explor...</div>
<svg class="a" style="left:144px;top:746px" width="16" height="16" viewBox="0 0 16 16"><path d="M8 1C3.5 1 0.5 4 0.5 8s3 7 7 7c2 0 2-2 1-3s0-2.5 1.5-2.5H13c2 0 2.5-1.5 2.5-3C15.5 3.5 12 1 8 1z" fill="#333"/><circle cx="4" cy="6" r="1" fill="#ddd"/><circle cx="7" cy="3.8" r="1" fill="#ddd"/><circle cx="10.5" cy="4.2" r="1" fill="#ddd"/><circle cx="3.5" cy="10" r="1" fill="#ddd"/></svg>
<div class="t" style="left:162px;top:745px;">Class Palett...</div>
<div class="hdr" style="left:0;top:771px;width:245px;border-left:none"><span style="left:-3px">tor</span></div>
<svg class="a" style="left:215px;top:776px" width="8" height="10" viewBox="0 0 8 10"><path d="M2 0.5h4M2.5 0.5v5.5M5.5 0.5v5.5M0.5 6h7M4 6.5v3" stroke="#111" stroke-width="1.1" fill="none"/></svg>
<svg class="a" style="left:232.5px;top:777.5px" width="7" height="7" viewBox="0 0 7 7"><path d="M0.5 0.5l6 6M6.5 0.5l-6 6" stroke="#222" stroke-width="1.2"/></svg>
<div class="a wh" style="left:0;top:792px;width:245px;height:226px;border-right:1px solid #8a8f96"></div>
<div class="t" style="left:-5px;top:794px;font-weight:bold">dPanelDemo.wo</div>
<div class="a" style="left:253px;top:104px;width:146px;height:18px;background:#1b7dc5"></div>
<div class="t" style="left:259px;top:104px;color:#e8f4ff;line-height:17px;font-size:11.8px">ExpandPanelDemo.wo</div>
<svg class="a" style="left:385px;top:108px" width="10" height="10"><path d="M1 1l8 8M9 1L1 9" stroke="#fff" stroke-width="2"/></svg>
<div class="a" style="left:251px;top:122px;width:1309px;height:1px;background:#2a6e9c"></div>
<div class="a" style="left:1562px;top:100px;width:4px;height:918px;background:#f7f7f9"></div>
<svg class="a" style="left:1506px;top:106px" width="56" height="12"><path d="M6.5 1.5v8l-5-4z" fill="none" stroke="#999"/><path d="M16.5 1.5v8l5-4z" fill="none" stroke="#999"/><path d="M28 3.5h8l-4 4z" fill="#444"/><path d="M42 0.5l9 9M51 0.5l-9 9" stroke="#333" stroke-width="1.3"/></svg>
<div class="a" style="left:251px;top:124px;width:24px;height:681px;background:#e1e1eb"></div>
<div class="a wh" style="left:275px;top:124px;width:1269px;height:681px"></div>
<div class="a" style="left:1544px;top:124px;width:18px;height:681px;background:#ededf0"></div>
<div class="a" style="left:1544px;top:123px;width:15px;height:7px;background:#c6c6c6"></div>
<div class="a" style="left:1544px;top:315px;width:15px;height:194px;background:#c6c6c6"></div>
<svg class="a" style="left:1547.5px;top:135.5px" width="9" height="7.0"><path d="M1 5.0L4.5 1.5L8 5.0" fill="none" stroke="#505050" stroke-width="2"/></svg>
<svg class="a" style="left:1547.5px;top:792.5px" width="9" height="7.0"><path d="M1 1.5L4.5 5.0L8 1.5" fill="none" stroke="#505050" stroke-width="2"/></svg>
<div class="a" style="left:251px;top:805px;width:1311px;height:16px;background:#e8e8ec"></div>
<div class="a" style="left:251px;top:805px;width:7px;height:15px;background:#d0d0d4"></div>
<div class="a" style="left:275px;top:805px;width:834px;height:15px;background:#c6c6c6"></div>
<svg class="a" style="left:262.5px;top:807.5px" width="7.0" height="9"><path d="M5.0 1L1.5 4.5L5.0 8" fill="none" stroke="#505050" stroke-width="2"/></svg>
<svg class="a" style="left:1532.5px;top:807.5px" width="7.0" height="9"><path d="M1.5 1L5.0 4.5L1.5 8" fill="none" stroke="#505050" stroke-width="2"/></svg>
<div class="a" style="left:275px;top:124px;width:1269px;height:681px;overflow:hidden">
<div class="t m" style="left:4px;top:1px">033</div>
<div class="t m" style="left:36px;top:1px">    <span class="k">Set</span> peViewType <span class="k">to</span> vtSelect</div>
<div class="t m" style="left:4px;top:19px">034</div>
<div class="t m" style="left:36px;top:19px">    <span class="k">Set</span> psCaption <span class="k">to</span> <span class="s">&quot;ExpandPanelDemo&quot;</span></div>
<div class="t m" style="left:4px;top:37px">035</div>
<div class="t m" style="left:36px;top:37px">    <span class="k">Set</span> piMaxWidth <span class="k">to</span> 1024</div>
<div class="t m" style="left:4px;top:55px">036</div>
<div class="t m" style="left:36px;top:55px">    <span class="k">Set</span> piColumnCount <span class="k">to</span> 6</div>
<div class="t m" style="left:4px;top:73px">037</div>
<div class="t m" style="left:4px;top:91px">038</div>
<div class="t m" style="left:36px;top:91px">    <span class="k">WebSetResponsive</span> piColumnCount rmTabletPortrait <span class="k">to</span> 3</div>
<div class="t m" style="left:4px;top:109px">039</div>
<div class="t m" style="left:4px;top:127px">040</div>
<div class="t m" style="left:36px;top:127px">    <span class="k">Object</span> oList <span class="k">is</span> <span class="k">a</span> cWebList</div>
<div class="t m" style="left:4px;top:145px">041</div>
<div class="t m" style="left:36px;top:145px">        <span class="k">Set</span> piColumnSpan <span class="k">to</span> 0</div>
<div class="t m" style="left:4px;top:163px">042</div>
<div class="t m" style="left:36px;top:163px">        <span class="k">Set</span> psCSSClass <span class="k">to</span> <span class="s">&quot;MobileList&quot;</span></div>
<div class="t m" style="left:4px;top:181px">043</div>
<div class="t m" style="left:36px;top:181px">        <span class="k">Set</span> pbFillHeight <span class="k">to</span> <span class="k">True</span></div>
<div class="t m" style="left:4px;top:199px">044</div>
<div class="t m" style="left:36px;top:199px">        <span class="k">Set</span> pbShowHeader <span class="k">to</span> <span class="k">False</span></div>
<div class="t m" style="left:4px;top:217px">045</div>
<div class="t m" style="left:36px;top:217px">        <span class="k">Set</span> piSortColumn <span class="k">to</span> 0</div>
<div class="t m" style="left:4px;top:235px">046</div>
<div class="t m" style="left:36px;top:235px">        <span class="k">Set</span> pbServerOnRowClick <span class="k">to</span> <span class="k">True</span></div>
<div class="t m" style="left:4px;top:253px">047</div>
<div class="t m" style="left:4px;top:271px">048</div>
<div class="t m" style="left:36px;top:271px">        <span class="k">Object</span> oCustomerNumber <span class="k">is</span> <span class="k">a</span> cWebColumn</div>
<div class="t m" style="left:4px;top:289px">049</div>
<div class="t m" style="left:36px;top:289px">            <span class="k">Entry_Item</span> Customer.Customer_Number</div>
<div class="t m" style="left:4px;top:307px">050</div>
<div class="t m" style="left:36px;top:307px">            <span class="k">Set</span> psCaption <span class="k">to</span> <span class="s">&quot;Customer Number&quot;</span></div>
<div class="t m" style="left:4px;top:325px">051</div>
<div class="t m" style="left:36px;top:325px">            <span class="k">Set</span> piWidth <span class="k">to</span> 63</div>
<div class="t m" style="left:4px;top:343px">052</div>
<div class="t m" style="left:36px;top:343px">            <span class="k">Set</span> psCSSClass <span class="k">to</span> <span class="s">&quot;RowCaption&quot;</span></div>
<div class="t m" style="left:4px;top:361px">053</div>
<div class="t m" style="left:36px;top:361px">        <span class="k">End_Object</span></div>
<div class="t m" style="left:4px;top:379px">054</div>
<div class="t m" style="left:4px;top:397px">055</div>
<div class="t m" style="left:36px;top:397px">        <span class="k">Object</span> oCustomerName <span class="k">is</span> <span class="k">a</span> cWebColumn</div>
<div class="t m" style="left:4px;top:415px">056</div>
<div class="t m" style="left:36px;top:415px">            <span class="k">Entry_Item</span> Customer.Name</div>
<div class="t m" style="left:4px;top:433px">057</div>
<div class="t m" style="left:36px;top:433px">            <span class="k">Set</span> psCaption <span class="k">to</span> <span class="s">&quot;Customer Name&quot;</span></div>
<div class="t m" style="left:4px;top:451px">058</div>
<div class="t m" style="left:36px;top:451px">            <span class="k">Set</span> piWidth <span class="k">to</span> 315</div>
<div class="t m" style="left:4px;top:469px">059</div>
<div class="t m" style="left:36px;top:469px">            <span class="k">Set</span> psCSSClass <span class="k">to</span> <span class="s">&quot;RowCaption&quot;</span></div>
<div class="t m" style="left:4px;top:487px">060</div>
<div class="t m" style="left:36px;top:487px">        <span class="k">End_Object</span></div>
<div class="t m" style="left:4px;top:505px">061</div>
<div class="t m" style="left:4px;top:523px">062</div>
<div class="t m" style="left:36px;top:523px">        <span class="k">Object</span> oCustomerCity <span class="k">is</span> <span class="k">a</span> cWebColumn</div>
<div class="t m" style="left:4px;top:541px">063</div>
<div class="t m" style="left:36px;top:541px">            <span class="k">Entry_Item</span> Customer.City</div>
<div class="t m" style="left:4px;top:559px">064</div>
<div class="t m" style="left:36px;top:559px">            <span class="k">Set</span> psCaption <span class="k">to</span> <span class="s">&quot;Customer City&quot;</span></div>
<div class="t m" style="left:4px;top:577px">065</div>
<div class="t m" style="left:36px;top:577px">            <span class="k">Set</span> piWidth <span class="k">to</span> 147</div>
<div class="t m" style="left:4px;top:595px">066</div>
<div class="t m" style="left:36px;top:595px">            <span class="k">Set</span> pbNewLine <span class="k">to</span> <span class="k">True</span></div>
<div class="t m" style="left:4px;top:613px">067</div>
<div class="t m" style="left:36px;top:613px">        <span class="k">End_Object</span></div>
<div class="t m" style="left:4px;top:631px">068</div>
<div class="t m" style="left:4px;top:649px">069</div>
<div class="t m" style="left:36px;top:649px">        <span class="k">Object</span> oCustomerBalance <span class="k">is</span> <span class="k">a</span> cWebColumn</div>
<div class="t m" style="left:4px;top:667px">070</div>
<div class="t m" style="left:36px;top:667px">            <span class="k">Entry_Item</span> Customer.Balance</div>
</div>
<div class="a" style="left:321px;top:236px;width:639px;height:400px;border:3px solid #e84b16"></div>
<svg class="a" style="left:606px;top:334px" width="9" height="17"><path d="M1 0.5h3l.5 .5.5-.5h3M4.5 1v15M1 16.5h3l.5-.5.5.5h3" fill="none" stroke="#111" stroke-width="1"/></svg>
<div class="hdr" style="left:249px;top:827px;width:1313px"><span>Output</span></div>
<svg class="a" style="left:1532px;top:832px" width="8" height="10" viewBox="0 0 8 10"><path d="M2 0.5h4M2.5 0.5v5.5M5.5 0.5v5.5M0.5 6h7M4 6.5v3" stroke="#111" stroke-width="1.1" fill="none"/></svg>
<svg class="a" style="left:1549.5px;top:833.5px" width="7" height="7" viewBox="0 0 7 7"><path d="M0.5 0.5l6 6M6.5 0.5l-6 6" stroke="#222" stroke-width="1.2"/></svg>
<svg class="a" style="left:256px;top:852px" width="16" height="16" viewBox="0 0 16 16"><circle cx="10.5" cy="9.5" r="3.8" fill="none" stroke="#333" stroke-width="1.4"/><path d="M8 12.5L3.5 16" stroke="#333" stroke-width="2"/><path d="M2 4.5h5v3" fill="none" stroke="#1d5c9c" stroke-width="1.8"/><path d="M0 4.5l3-3v6z" fill="#1d5c9c"/></svg>
<svg class="a" style="left:278px;top:852px" width="16" height="16" viewBox="0 0 16 16"><circle cx="10.5" cy="9.5" r="3.8" fill="none" stroke="#333" stroke-width="1.4"/><path d="M8 12.5L3.5 16" stroke="#333" stroke-width="2"/><path d="M0 4.5h5v3" fill="none" stroke="#1d5c9c" stroke-width="1.8"/><path d="M8 4.5l-3-3v6z" fill="#1d5c9c"/></svg>
<svg class="a" style="left:306px;top:852px" width="16" height="16" viewBox="0 0 16 16"><g fill="none" stroke="#333" stroke-width="1.2"><path d="M5.5 3.5V0.6h6l3 3v8.9h-3"/><path d="M1.5 4.6h6l3 3v8h-9z"/></g></svg>
<svg class="a" style="left:327px;top:852px" width="16" height="16" viewBox="0 0 16 16"><path d="M2 2l12 12M14 2L2 14" stroke="#a82222" stroke-width="2.6"/></svg>
<svg class="a" style="left:355px;top:852px" width="16" height="16" viewBox="0 0 16 16"><path d="M3.5 0.5h12v12M1.8 2.5h12v2" fill="none" stroke="#333" stroke-width=".9"/><rect x="0.5" y="4.5" width="11" height="11" fill="none" stroke="#333" stroke-width="1.2"/><path d="M3 10h6M6 7v6" stroke="#1d5c9c" stroke-width="1.5"/></svg>
<svg class="a" style="left:377px;top:852px" width="16" height="16" viewBox="0 0 16 16"><path d="M3.5 0.5h12v12M1.8 2.5h12v2" fill="none" stroke="#333" stroke-width=".9"/><rect x="0.5" y="4.5" width="11" height="11" fill="none" stroke="#333" stroke-width="1.2"/><path d="M3 10h6" stroke="#333" stroke-width="1.5"/></svg>
<div class="a" style="left:297px;top:850px;width:1px;height:22px;background:#ccced6"></div>
<div class="a" style="left:348px;top:850px;width:1px;height:22px;background:#ccced6"></div>
<div class="a wh" style="left:249px;top:872px;width:1313px;height:121px;border:1px solid #828790"></div>
<div class="a" style="left:1544px;top:875px;width:15px;height:115px;background:#ececf0"></div>
<div class="a" style="left:1544px;top:957px;width:15px;height:17px;background:#cdcdcd"></div>
<svg class="a" style="left:1547.5px;top:880.5px" width="9" height="7.0"><path d="M1 5.0L4.5 1.5L8 5.0" fill="none" stroke="#505050" stroke-width="2"/></svg>
<svg class="a" style="left:1547.5px;top:978.5px" width="9" height="7.0"><path d="M1 1.5L4.5 5.0L8 1.5" fill="none" stroke="#505050" stroke-width="2"/></svg>
<div class="a" style="left:262px;top:873px;width:1px;height:101px;background-image:linear-gradient(#444 50%,transparent 50%);background-size:1px 2px"></div>
<div class="a" style="left:277px;top:873px;width:1px;height:65px;background-image:linear-gradient(#444 50%,transparent 50%);background-size:1px 2px"></div>
<div class="a" style="left:278px;top:883px;width:7px;height:1px;background-image:linear-gradient(90deg,#444 50%,transparent 50%);background-size:2px 1px"></div>
<svg class="a" style="left:288px;top:878px" width="9" height="11"><path d="M1 1v9l7-4.5z" fill="none" stroke="#555" stroke-width="1.1"/></svg>
<div class="a" style="left:278px;top:901px;width:7px;height:1px;background-image:linear-gradient(90deg,#444 50%,transparent 50%);background-size:2px 1px"></div>
<svg class="a" style="left:288px;top:896px" width="9" height="11"><path d="M1 1v9l7-4.5z" fill="none" stroke="#555" stroke-width="1.1"/></svg>
<div class="a" style="left:278px;top:919px;width:7px;height:1px;background-image:linear-gradient(90deg,#444 50%,transparent 50%);background-size:2px 1px"></div>
<svg class="a" style="left:288px;top:914px" width="9" height="11"><path d="M1 1v9l7-4.5z" fill="none" stroke="#555" stroke-width="1.1"/></svg>
<div class="a" style="left:278px;top:937px;width:7px;height:1px;background-image:linear-gradient(90deg,#444 50%,transparent 50%);background-size:2px 1px"></div>
<svg class="a" style="left:288px;top:932px" width="9" height="11"><path d="M1 1v9l7-4.5z" fill="none" stroke="#555" stroke-width="1.1"/></svg>
<div class="a" style="left:263px;top:955px;width:7px;height:1px;background-image:linear-gradient(90deg,#444 50%,transparent 50%);background-size:2px 1px"></div>
<div class="a" style="left:263px;top:973px;width:7px;height:1px;background-image:linear-gradient(90deg,#444 50%,transparent 50%);background-size:2px 1px"></div>
<div class="t" style="left:306px;top:875px;">Total Pages</div>
<div class="t" style="left:378px;top:875px;">: 0</div>
<div class="t" style="left:306px;top:893px;">Static Data</div>
<div class="t" style="left:374px;top:893px;">: 333961</div>
<div class="t" style="left:306px;top:911px;">Message area</div>
<div class="t" style="left:386px;top:911px;">: 209421</div>
<div class="t" style="left:306px;top:929px;">Total Blocks</div>
<div class="t" style="left:378px;top:929px;">: 13236</div>
<svg class="a" style="left:271px;top:949px" width="14" height="14"><circle cx="7" cy="7" r="6.5" fill="#333"/><rect x="4" y="4" width="6" height="6" fill="#fff"/><rect x="5.2" y="5.2" width="3.6" height="3.6" fill="#333"/></svg>
<div class="t" style="left:291px;top:947px;">----Compile Finished----</div>
<div class="a" style="left:289px;top:965px;width:212px;height:18px;background:#efefef"></div>
<svg class="a" style="left:271px;top:966px" width="14" height="14"><circle cx="7" cy="7" r="6.8" fill="#2d8fd5"/><rect x="6" y="6" width="2" height="5.5" fill="#fff"/><circle cx="7" cy="3.8" r="1.1" fill="#fff"/></svg>
<div class="t" style="left:291px;top:965px;">Starting web application: WebListDemo</div>
<div class="a" style="left:249px;top:993px;width:1313px;height:25px;background:#eeeef2"></div>
<div class="tab" style="left:251px;top:994px;width:67px;height:22px"></div>
<div class="tab" style="left:318px;top:994px;width:152px;height:22px"></div>
<div class="tab" style="left:470px;top:994px;width:92px;height:22px"></div>
<div class="tab" style="left:562px;top:994px;width:90px;height:22px"></div>
<div class="tab" style="left:652px;top:994px;width:206px;height:22px"></div>
<div class="a wh" style="left:251px;top:994px;width:67px;height:24px"></div>
<svg class="a" style="left:256px;top:998px" width="16" height="16" viewBox="0 0 16 16"><path d="M8 2.5H1.5v12H8" fill="none" stroke="#333" stroke-width="1.4"/><path d="M4 8.5h7" stroke="#333" stroke-width="2.4"/><path d="M10 4l5 4.5-5 4.5z" fill="#333"/></svg>
<svg class="a" style="left:324px;top:998px" width="16" height="16" viewBox="0 0 16 16"><path d="M3 3.5h10v12H3z" fill="none" stroke="#333" stroke-width="1.3"/><path d="M6 3.5V1h4v2.5" fill="none" stroke="#333" stroke-width="1.2"/><path d="M5 9l2.5 3 4-6" fill="none" stroke="#333" stroke-width="1.5"/></svg>
<svg class="a" style="left:476px;top:998px" width="16" height="16" viewBox="0 0 16 16"><path d="M5 1.5h5.5l3 3V15H5" fill="none" stroke="#444" stroke-width="1.2"/><circle cx="6" cy="10" r="3" fill="none" stroke="#1d5c9c" stroke-width="1.4"/><path d="M4 12l-3 3" stroke="#1d5c9c" stroke-width="1.8"/></svg>
<svg class="a" style="left:567px;top:998px" width="16" height="16" viewBox="0 0 16 16"><path d="M4 1.5h11.5v12H10" fill="none" stroke="#333" stroke-width="1.2"/><rect x="4" y="1" width="11.5" height="2.5" fill="#333"/><circle cx="5" cy="11" r="4.5" fill="#d4000e"/></svg>
<svg class="a" style="left:657px;top:998px" width="16" height="16" viewBox="0 0 16 16"><rect x="0.6" y="1.6" width="14.8" height="13" fill="#fff" stroke="#333" stroke-width="1.2"/><rect x="0" y="1" width="16" height="2.5" fill="#333"/><path d="M2 14l3.5-7 3.5 7z" fill="#f5d63d"/><path d="M5.5 9.5v2.5" stroke="#333" stroke-width="1.2"/><path d="M9 9l2 2.5 3.5-5" fill="none" stroke="#333" stroke-width="1.4"/></svg>
<div class="t" style="left:274px;top:996px;">Output</div>
<div class="t" style="left:341px;top:996px;">To Do List [WebApp.src]</div>
<div class="t" style="left:495px;top:996px;">Find Results</div>
<div class="t" style="left:586px;top:996px;">Breakpoints</div>
<div class="t" style="left:676px;top:996px;">Problem Resolution [WebApp.src]</div>
<div class="hdr" style="left:1566px;top:101px;width:289px"><span>Workspace Explorer</span></div>
<svg class="a" style="left:1824px;top:106px" width="8" height="10" viewBox="0 0 8 10"><path d="M2 0.5h4M2.5 0.5v5.5M5.5 0.5v5.5M0.5 6h7M4 6.5v3" stroke="#111" stroke-width="1.1" fill="none"/></svg>
<svg class="a" style="left:1841.5px;top:107.5px" width="7" height="7" viewBox="0 0 7 7"><path d="M0.5 0.5l6 6M6.5 0.5l-6 6" stroke="#222" stroke-width="1.2"/></svg>
<div class="hdr" style="left:1855px;top:102px;width:65px"></div>
<svg class="a" style="left:1889px;top:107px" width="8" height="10" viewBox="0 0 8 10"><path d="M2 0.5h4M2.5 0.5v5.5M5.5 0.5v5.5M0.5 6h7M4 6.5v3" stroke="#111" stroke-width="1.1" fill="none"/></svg>
<svg class="a" style="left:1906.5px;top:108.5px" width="7" height="7" viewBox="0 0 7 7"><path d="M0.5 0.5l6 6M6.5 0.5l-6 6" stroke="#222" stroke-width="1.2"/></svg>
<div class="t" style="left:1571px;top:129px;">Current Project:</div>
<div class="a" style="left:1661px;top:127px;width:193px;height:23px;background:#e5e5e5;border:1px solid #acacac"></div>
<div class="t" style="left:1665px;top:129px;">WebApp.src</div>
<svg class="a" style="left:1839px;top:135px" width="10" height="6"><path d="M0.5 0.5l4.5 4.5 4.5-4.5" fill="none" stroke="#333" stroke-width="1.1"/></svg>
<div class="a" style="left:1855px;top:128px;width:64px;height:23px;background:#e5e5e5;border:1px solid #acacac"></div>
<svg class="a" style="left:1904px;top:136px" width="10" height="6"><path d="M0.5 0.5l4.5 4.5 4.5-4.5" fill="none" stroke="#333" stroke-width="1.1"/></svg>
<div class="a wh" style="left:1566px;top:154px;width:290px;height:307px;border:1px solid #828790"></div>
<div class="a wh" style="left:1855px;top:155px;width:65px;height:307px;border:1px solid #828790"></div>
<svg class="a" style="left:1574px;top:157px" width="32" height="18"><rect x="1.5" y="5.5" width="8" height="8" fill="#f6f6f6" stroke="#a8a8a8"/><path d="M3.3 9.5h4.4M5.5 7.3v4.4" stroke="#3a3a6a" stroke-width="1"/><rect x="11" y="9" width="1" height="1" fill="#555"/><path d="M14.5 3v6" stroke="#c0c0c0"/><rect x="14" y="1" width="14" height="2.5" fill="#333"/><path d="M27.5 1v12M23 12.5h5" stroke="#333" stroke-width="1.2"/><circle cx="17.5" cy="12" r="4.6" fill="#333"/><path d="M16 8.5v7M19 8.5v7M14 10.5h7M14 13.5h7" stroke="#fff" stroke-width="0.9"/></svg>
<div class="t" style="left:1608px;top:156px;">WebApp.src</div>
<div class="hdr" style="left:1566px;top:466px;width:289px"><span>Properties</span></div>
<svg class="a" style="left:1824px;top:471px" width="8" height="10" viewBox="0 0 8 10"><path d="M2 0.5h4M2.5 0.5v5.5M5.5 0.5v5.5M0.5 6h7M4 6.5v3" stroke="#111" stroke-width="1.1" fill="none"/></svg>
<svg class="a" style="left:1841.5px;top:472.5px" width="7" height="7" viewBox="0 0 7 7"><path d="M0.5 0.5l6 6M6.5 0.5l-6 6" stroke="#222" stroke-width="1.2"/></svg>
<div class="hdr" style="left:1855px;top:467px;width:65px"></div>
<svg class="a" style="left:1889px;top:472px" width="8" height="10" viewBox="0 0 8 10"><path d="M2 0.5h4M2.5 0.5v5.5M5.5 0.5v5.5M0.5 6h7M4 6.5v3" stroke="#111" stroke-width="1.1" fill="none"/></svg>
<svg class="a" style="left:1906.5px;top:473.5px" width="7" height="7" viewBox="0 0 7 7"><path d="M0.5 0.5l6 6M6.5 0.5l-6 6" stroke="#222" stroke-width="1.2"/></svg>
<div class="t" style="left:1568px;top:496px;">Object:</div>
<div class="a wh" style="left:1609px;top:494px;width:239px;height:23px;border:1px solid #7a7a7a"></div>
<div class="t" style="left:1612px;top:496px;">oList</div>
<div class="t" style="left:1579px;top:528px;">Class</div>
<div class="a" style="left:1609px;top:526px;width:239px;height:23px;background:#f0f0f0;border:1px solid #dadada"></div>
<div class="t" style="left:1612px;top:528px;">cWebList</div>
<div class="a wh" style="left:1855px;top:517px;width:62px;height:477px;border:1px solid #828790;border-left:none;overflow:hidden"><div class="t" style="left:-4px;top:37px">n DDO]</div><div class="t" style="left:0;top:55px">onstrained ·</div></div>
<div class="a" style="left:1855px;top:976px;width:60px;height:17px;background:#f0f0f0"></div>
<svg class="a" style="left:1903.5px;top:979.5px" width="7.0" height="9"><path d="M1.5 1L5.0 4.5L1.5 8" fill="none" stroke="#505050" stroke-width="2"/></svg>
<div class="tab" style="left:1568px;top:559px;width:64px;height:21px;border-top:1px solid #dcdce0"></div>
<div class="tab" style="left:1632px;top:559px;width:53px;height:21px;border-top:1px solid #dcdce0"></div>
<div class="a wh" style="left:1685px;top:557px;width:50px;height:24px;border:1px solid #dcdce0;border-bottom:none"></div>
<div class="t" style="left:1574px;top:560px;">Properties</div>
<div class="t" style="left:1639px;top:560px;">Binding</div>
<div class="t" style="left:1691px;top:558px;">Events</div>
<div class="a wh" style="left:1570px;top:581px;width:280px;height:408px;border:1px solid #828790"></div>
<svg class="a" style="left:1578px;top:584px" width="11" height="16" viewBox="0 0 11 16"><path d="M5 1L10.2 1L6.6 6.6L10.2 6.6L2.3 14.8L5 8.6L1 8.6Z" fill="#b6b6b8"/></svg>
<div class="t" style="left:1597px;top:583px;">Destroy_Object</div>
<svg class="a" style="left:1578px;top:602px" width="11" height="16" viewBox="0 0 11 16"><path d="M5 1L10.2 1L6.6 6.6L10.2 6.6L2.3 14.8L5 8.6L1 8.6Z" fill="#b6b6b8"/></svg>
<div class="t" style="left:1597px;top:601px;">OnBlur</div>
<svg class="a" style="left:1578px;top:620px" width="11" height="16" viewBox="0 0 11 16"><path d="M5 1L10.2 1L6.6 6.6L10.2 6.6L2.3 14.8L5 8.6L1 8.6Z" fill="#b6b6b8"/></svg>
<div class="t" style="left:1597px;top:619px;">OnChangeCurrentRow</div>
<svg class="a" style="left:1578px;top:638px" width="11" height="16" viewBox="0 0 11 16"><path d="M5 1L10.2 1L6.6 6.6L10.2 6.6L2.3 14.8L5 8.6L1 8.6Z" fill="#b6b6b8"/></svg>
<div class="t" style="left:1597px;top:637px;">OnCloseModalDialog</div>
<svg class="a" style="left:1578px;top:656px" width="11" height="16" viewBox="0 0 11 16"><path d="M5 1L10.2 1L6.6 6.6L10.2 6.6L2.3 14.8L5 8.6L1 8.6Z" fill="#b6b6b8"/></svg>
<div class="t" style="left:1597px;top:655px;">OnDefineRowCssClass</div>
<svg class="a" style="left:1578px;top:674px" width="11" height="16" viewBox="0 0 11 16"><path d="M5 1L10.2 1L6.6 6.6L10.2 6.6L2.3 14.8L5 8.6L1 8.6Z" fill="#b6b6b8"/></svg>
<div class="t" style="left:1597px;top:673px;">OnDeleteRow</div>
<svg class="a" style="left:1578px;top:692px" width="11" height="16" viewBox="0 0 11 16"><path d="M5 1L10.2 1L6.6 6.6L10.2 6.6L2.3 14.8L5 8.6L1 8.6Z" fill="#b6b6b8"/></svg>
<div class="t" style="left:1597px;top:691px;">OnFocus</div>
<svg class="a" style="left:1578px;top:710px" width="11" height="16" viewBox="0 0 11 16"><path d="M5 1L10.2 1L6.6 6.6L10.2 6.6L2.3 14.8L5 8.6L1 8.6Z" fill="#b6b6b8"/></svg>
<div class="t" style="left:1597px;top:709px;">OnGetNavigateBackData</div>
<svg class="a" style="left:1578px;top:728px" width="11" height="16" viewBox="0 0 11 16"><path d="M5 1L10.2 1L6.6 6.6L10.2 6.6L2.3 14.8L5 8.6L1 8.6Z" fill="#b6b6b8"/></svg>
<div class="t" style="left:1597px;top:727px;">OnGetNavigateForwardData</div>
<svg class="a" style="left:1578px;top:746px" width="11" height="16" viewBox="0 0 11 16"><path d="M5 1L10.2 1L6.6 6.6L10.2 6.6L2.3 14.8L5 8.6L1 8.6Z" fill="#b6b6b8"/></svg>
<div class="t" style="left:1597px;top:745px;">OnLoad</div>
<svg class="a" style="left:1578px;top:764px" width="11" height="16" viewBox="0 0 11 16"><path d="M5 1L10.2 1L6.6 6.6L10.2 6.6L2.3 14.8L5 8.6L1 8.6Z" fill="#b6b6b8"/></svg>
<div class="t" style="left:1597px;top:763px;">OnManualLoadData</div>
<svg class="a" style="left:1578px;top:782px" width="11" height="16" viewBox="0 0 11 16"><path d="M5 1L10.2 1L6.6 6.6L10.2 6.6L2.3 14.8L5 8.6L1 8.6Z" fill="#b6b6b8"/></svg>
<div class="t" style="left:1597px;top:781px;">OnNavigateBack</div>
<svg class="a" style="left:1578px;top:800px" width="11" height="16" viewBox="0 0 11 16"><path d="M5 1L10.2 1L6.6 6.6L10.2 6.6L2.3 14.8L5 8.6L1 8.6Z" fill="#b6b6b8"/></svg>
<div class="t" style="left:1597px;top:799px;">OnProcessDataSet</div>
<svg class="a" style="left:1578px;top:818px" width="11" height="16" viewBox="0 0 11 16"><path d="M5 1L10.2 1L6.6 6.6L10.2 6.6L2.3 14.8L5 8.6L1 8.6Z" fill="#b6b6b8"/></svg>
<div class="t" style="left:1597px;top:817px;">OnRowClick</div>
<svg class="a" style="left:1578px;top:836px" width="11" height="16" viewBox="0 0 11 16"><path d="M5 1L10.2 1L6.6 6.6L10.2 6.6L2.3 14.8L5 8.6L1 8.6Z" fill="#b6b6b8"/></svg>
<div class="t" style="left:1597px;top:835px;">OnSearch</div>
<svg class="a" style="left:1578px;top:854px" width="11" height="16" viewBox="0 0 11 16"><path d="M5 1L10.2 1L6.6 6.6L10.2 6.6L2.3 14.8L5 8.6L1 8.6Z" fill="#b6b6b8"/></svg>
<div class="t" style="left:1597px;top:853px;">Refresh</div>
<div class="a wh" style="left:1568px;top:994px;width:80px;height:24px"></div>
<div class="tab" style="left:1650px;top:994px;width:196px;height:22px"></div>
<div class="a wh" style="left:1855px;top:994px;width:60px;height:25px"></div>
<svg class="a" style="left:1571px;top:999px" width="15" height="15" viewBox="0 0 16 16"><rect x="4.5" y="0.5" width="11" height="15" fill="#fff" stroke="#444"/><path d="M6 3h2M9 3h5M6 6h2M9 6h5M6 9h2M9 9h5M6 12h2M9 12h5" stroke="#444" stroke-width="1.2"/><path d="M0 9h4v5H2z" fill="#333"/></svg>
<div class="t" style="left:1589px;top:996px;">Properties</div>
<svg class="a" style="left:1655px;top:998px" width="16" height="16" viewBox="0 0 16 16"><ellipse cx="12" cy="2.5" rx="3.5" ry="1.5" fill="#444"/><rect x="8.5" y="2.5" width="7" height="6" fill="#444"/><path d="M4 6v3M1 12V9h7v3" fill="none" stroke="#333" stroke-width="1.3"/><rect x="2" y="4" width="4" height="3" fill="#333"/><rect x="0" y="12" width="3" height="3" fill="#333"/><rect x="6.5" y="12" width="3" height="3" fill="#333"/></svg>
<div class="t" style="left:1673px;top:996px;">DDO Explorer [ExpandPanelDe...</div>
<div class="t" style="left:1855px;top:998px;">r [Expan...</div>
<div class="a" style="left:0;top:1018px;width:1920px;height:22px;background:#0e7ed2"></div>
<div class="t" style="left:-1px;top:1020px;color:#fff">\WebListDemo\AppSrc\ExpandPanelDemo.wo</div>
<div class="t" style="left:1472px;top:1020px;color:#fff">Ln 46</div>
<div class="t" style="left:1512px;top:1020px;color:#fff">Col 39</div>
<div class="t" style="left:1728px;top:1020px;color:#fff">INS</div>
<div class="t" style="left:1772px;top:1020px;color:#7db9ea">CAPS</div>
<div class="t" style="left:1816px;top:1020px;color:#fff">NUM</div>
<div class="a" style="left:1855px;top:1019px;width:65px;height:21px;overflow:hidden"><div class="t" style="left:-2px;top:3px;color:#7db9ea">PS</div><div class="t" style="left:26px;top:3px;color:#fff">NUM</div></div>
<svg class="a" style="left:1693px;top:1021px" width="16" height="16"><circle cx="8" cy="8" r="6.5" fill="none" stroke="#ddd" stroke-width="2.2"/><path d="M3.5 3.5l9 9" stroke="#ddd" stroke-width="2.2"/></svg>
<div class="a" style="left:0;top:1040px;width:1920px;height:40px;background:#1b438b"></div>
<div class="a" style="left:131px;top:1040px;width:48px;height:40px;background:#2b56a4"></div>
<div class="a" style="left:86px;top:1078px;width:40px;height:2px;background:#8aa6d8"></div>
<div class="a" style="left:131px;top:1078px;width:48px;height:2px;background:#8aa6d8"></div>
<svg class="a" style="left:0;top:1051px" width="16" height="18"><circle cx="8.5" cy="6.5" r="5.5" fill="none" stroke="#fff" stroke-width="1.5"/><path d="M4.5 10.5L0 16" stroke="#fff" stroke-width="1.6"/></svg>
<svg class="a" style="left:46px;top:1052px" width="17" height="16"><rect x="1" y="3.5" width="10" height="9" fill="none" stroke="#fff" stroke-width="1.4"/><path d="M0 1h12M0 15h12M14 1v14" stroke="#fff" stroke-width="1.4"/><rect x="13.5" y="4" width="2.5" height="3" fill="#fff"/></svg>
<svg class="a" style="left:94px;top:1048px" width="24" height="24" viewBox="0 0 24 24"><circle cx="12" cy="12" r="11" fill="#db4437"/><path d="M12 12L2.5 6.5A11 11 0 0 0 7 21.5z" fill="#0f9d58"/><path d="M12 12L7 21.5A11 11 0 0 0 21.5 6.5z" fill="#f4c20d"/><path d="M12 12L21.5 6.5A11 11 0 0 0 2.5 6.5z" fill="#db4437"/><circle cx="12" cy="12" r="5" fill="#fff"/><circle cx="12" cy="12" r="4" fill="#4285f4"/></svg>
<svg class="a" style="left:143px;top:1048px" width="24" height="24"><rect width="24" height="24" rx="1" fill="#dc3b14"/><text x="2" y="18" font-family="Liberation Sans" font-weight="bold" font-size="15" fill="#fff" letter-spacing="-1">DF</text></svg>
<div class="a" style="left:559px;top:377px;width:367px;height:20px;background:#ffffe1;border:1px solid #767676;box-shadow:2px 2px 2px rgba(0,0,0,.25)"></div>
<div class="t" style="left:566px;top:378px;font-size:11.8px">Property <b>Boolean pbServerOnRowClick</b> // { WebProperty=Client }</div>
<div class="a wh" style="left:557px;top:404px;width:374px;height:194px;border:1px solid #adadad;box-shadow:2px 3px 4px rgba(0,0,0,.5)"></div>
<div class="a" style="left:579px;top:482px;width:333px;height:19px;background:#3b8ee8;border:1px dotted #1a3a6a"></div>
<svg class="a" style="left:564px;top:411px" width="11" height="11" viewBox="0 0 11 11"><rect x="0.5" y="0.5" width="10" height="10" rx="1" fill="#f4f4f4" stroke="#999"/><path d="M3 3.5h5M3 5.5h5M3 7.5h5" stroke="#666" stroke-width="1"/></svg>
<div class="t" style="left:583px;top:407px;color:#1e1e1e;letter-spacing:-0.6px;">TPM_TOPALIGN</div>
<svg class="a" style="left:564px;top:430px" width="11" height="11" viewBox="0 0 11 11"><rect x="0.5" y="0.5" width="10" height="10" rx="1" fill="#f4f4f4" stroke="#999"/><path d="M3 3.5h5M3 5.5h5M3 7.5h5" stroke="#666" stroke-width="1"/></svg>
<div class="t" style="left:583px;top:426px;color:#1e1e1e;letter-spacing:-0.6px;">TPM_VCENTERALIGN</div>
<svg class="a" style="left:564px;top:449px" width="11" height="11" viewBox="0 0 11 11"><rect x="0.5" y="0.5" width="10" height="10" rx="1" fill="#f4f4f4" stroke="#999"/><path d="M3 3.5h5M3 5.5h5M3 7.5h5" stroke="#666" stroke-width="1"/></svg>
<div class="t" style="left:583px;top:445px;color:#1e1e1e;letter-spacing:-0.6px;">TPM_VERTICAL</div>
<svg class="a" style="left:564px;top:468px" width="11" height="11" viewBox="0 0 11 11"><rect x="0.5" y="0.5" width="10" height="10" rx="1" fill="#f4f4f4" stroke="#999"/><path d="M3 3.5h5M3 5.5h5M3 7.5h5" stroke="#666" stroke-width="1"/></svg>
<div class="t" style="left:583px;top:464px;color:#1e1e1e;letter-spacing:-0.6px;">TRANSPARENT</div>
<svg class="a" style="left:564px;top:487px" width="11" height="11" viewBox="0 0 11 11"><rect x="0.5" y="0.5" width="10" height="10" rx="1" fill="#f4f4f4" stroke="#999"/><path d="M3 3.5h5M3 5.5h5M3 7.5h5" stroke="#666" stroke-width="1"/></svg>
<div class="t" style="left:583px;top:483px;color:#fff;">True</div>
<svg class="a" style="left:564px;top:506px" width="11" height="11" viewBox="0 0 11 11"><rect x="0.5" y="0.5" width="10" height="10" rx="1" fill="#f4f4f4" stroke="#999"/><path d="M3 3.5h5M3 5.5h5M3 7.5h5" stroke="#666" stroke-width="1"/></svg>
<div class="t" style="left:583px;top:502px;color:#1e1e1e;">ttAscii</div>
<svg class="a" style="left:564px;top:525px" width="11" height="11" viewBox="0 0 11 11"><rect x="0.5" y="0.5" width="10" height="10" rx="1" fill="#f4f4f4" stroke="#999"/><path d="M3 3.5h5M3 5.5h5M3 7.5h5" stroke="#666" stroke-width="1"/></svg>
<div class="t" style="left:583px;top:521px;color:#1e1e1e;">ttBinary</div>
<svg class="a" style="left:564px;top:544px" width="11" height="11" viewBox="0 0 11 11"><rect x="0.5" y="0.5" width="10" height="10" rx="1" fill="#f4f4f4" stroke="#999"/><path d="M3 3.5h5M3 5.5h5M3 7.5h5" stroke="#666" stroke-width="1"/></svg>
<div class="t" style="left:583px;top:540px;color:#1e1e1e;letter-spacing:-0.6px;">TTDT_AUTOMATIC</div>
<svg class="a" style="left:564px;top:563px" width="11" height="11" viewBox="0 0 11 11"><rect x="0.5" y="0.5" width="10" height="10" rx="1" fill="#f4f4f4" stroke="#999"/><path d="M3 3.5h5M3 5.5h5M3 7.5h5" stroke="#666" stroke-width="1"/></svg>
<div class="t" style="left:583px;top:559px;color:#1e1e1e;letter-spacing:-0.6px;">TTDT_AUTOPOP</div>
<svg class="a" style="left:564px;top:582px" width="11" height="11" viewBox="0 0 11 11"><rect x="0.5" y="0.5" width="10" height="10" rx="1" fill="#f4f4f4" stroke="#999"/><path d="M3 3.5h5M3 5.5h5M3 7.5h5" stroke="#666" stroke-width="1"/></svg>
<div class="t" style="left:583px;top:578px;color:#1e1e1e;letter-spacing:-0.6px;">TTDT_INITIAL</div>
<div class="a" style="left:913px;top:405px;width:17px;height:192px;background:#f0f0f0"></div>
<div class="a" style="left:914px;top:542px;width:15px;height:18px;background:#cdcdcd"></div>
<svg class="a" style="left:917.0px;top:411.75px" width="8" height="6.5"><path d="M1 4.5L4.0 1.5L7 4.5" fill="none" stroke="#444" stroke-width="2"/></svg>
<svg class="a" style="left:917.0px;top:583.75px" width="8" height="6.5"><path d="M1 1.5L4.0 4.5L7 1.5" fill="none" stroke="#444" stroke-width="2"/></svg>
</body></html>
